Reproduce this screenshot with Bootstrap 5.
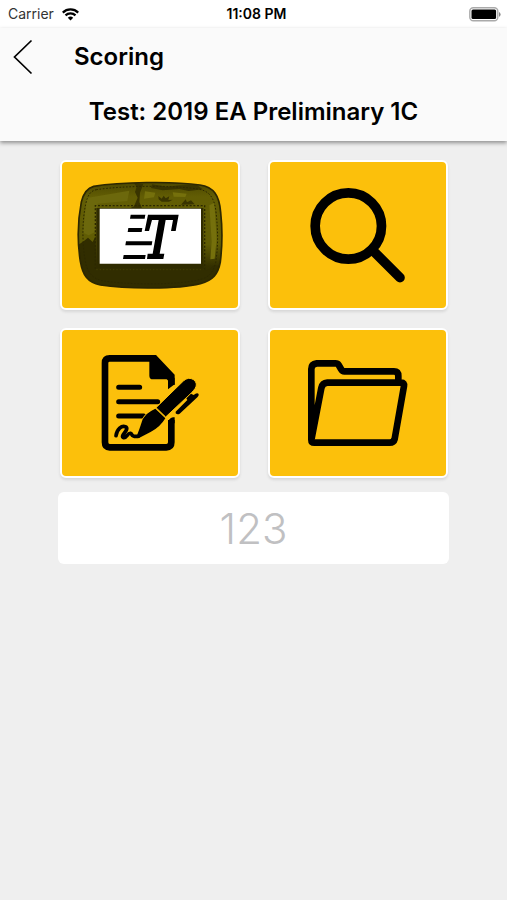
<!DOCTYPE html>
<html lang="en">
<head>
<meta charset="utf-8">
<meta name="viewport" content="width=device-width, initial-scale=1">
<title>Scoring</title>
<link href="https://cdn.jsdelivr.net/npm/bootstrap@5.3.0/dist/css/bootstrap.min.css" rel="stylesheet">
<style>
body { background: #efefef; color: #000; font-family: Inter, "Liberation Sans", sans-serif; }
.status-bar { height: 28px; font-size: 14px; line-height: 28px; padding: 0 6px 0 8px; background: #fff; }
.status-side { flex: 1 1 0; }
.status-time { font-size: 14px; padding-left: 4px; }
.carrier { color: #333; }
.app-header { background: #fafafa; box-shadow: 0 2px 4px rgba(0,0,0,.4); }
.title-row { height: 58px; padding-left: 12px; gap: 40px; }
.back-btn { width: 22px; height: 36px; line-height: 0; }
.screen-title, .test-title { font-size: 24px; line-height: 28px; font-weight: 600; }
.test-title { padding: 12px 0 15px; }
.scoring-main { padding: 19px 58px; }
.tile-grid { display: grid; grid-template-columns: 1fr 1fr; gap: 18px 28px; padding: 0 1px 0 2px; }
.tile { background: #fcc00b; border: 2px solid #fff; border-radius: 6px; box-shadow: 0 2px 3px rgba(0,0,0,.1); line-height: 0; overflow: hidden; }
.tile:hover, .tile:focus { background: #fcc00b; border-color: #fff; }
.tile svg { width: 100%; height: auto; }
.score-input { height: 72px; margin-top: 14px; font-size: 42px; font-weight: 300; border-radius: 6px; }
.score-input::placeholder { color: #c0c0c2; opacity: 1; }
</style>
</head>
<body>
<div class="status-bar d-flex align-items-center">
  <div class="status-side carrier d-flex align-items-center gap-2">
    <span>Carrier</span>
    <svg width="17" height="13" viewBox="0 0 17 13" fill="none" stroke="#000" stroke-width="2.2" aria-label="Wi-Fi"><path d="M.8 4.6a11 11 0 0 1 15.4 0M3.5 7.4a7.1 7.1 0 0 1 10 0"/><path d="M8.500 12.500 5.800 9.800a3.900 3.900 0 0 1 5.400 0Z" fill="#000" stroke="none"/></svg>
  </div>
  <div class="status-time fw-semibold">11:08 PM</div>
  <div class="status-side d-flex justify-content-end">
    <svg width="32" height="15" viewBox="0 0 32 15" aria-label="Battery full"><rect x=".8" y=".8" width="28" height="13" rx="3.500" fill="#fff" stroke="#aaa" stroke-width="1.400"/><rect x="2.500" y="2.500" width="24.600" height="9.600" rx="1.500"/><path d="M30 5q1.600.7 1.600 2.400T30 9.800Z" fill="#888"/></svg>
  </div>
</div>
<header class="app-header">
  <div class="title-row d-flex align-items-center">
    <button type="button" class="back-btn btn p-0 border-0" aria-label="Back">
      <svg width="22" height="36" viewBox="0 0 22 36" fill="none" stroke="#000" stroke-width="1.700"><path d="M19.500 1.500 2.500 18l17 16.500"/></svg>
    </button>
    <h1 class="screen-title m-0">Scoring</h1>
  </div>
  <h2 class="test-title m-0 text-center">Test: 2019 EA Preliminary 1C</h2>
</header>
<main class="scoring-main">
  <div class="tile-grid">
    <button type="button" class="tile btn p-0" aria-label="Bridle number">
      <svg viewBox="36 30 528 438">
        <defs>
          <linearGradient id="leather" x1="0" y1="0" x2="0" y2="1"><stop offset="0" stop-color="#4a4500"/><stop offset=".15" stop-color="#625d04"/><stop offset=".58" stop-color="#605c04"/><stop offset=".78" stop-color="#343000"/><stop offset="1" stop-color="#2b2800"/></linearGradient>
          <clipPath id="patch"><path d="M131 103C210 90 370 87 450 99C491 105 508 130 512 181C518 235 517 280 511 330C504 367 489 384 451 395C383 412 230 411 151 399C112 391 98 369 91 328C82 271 83 207 94 150C101 122 111 108 131 103Z"/></clipPath>
        </defs>
        <g clip-path="url(#patch)">
          <rect x="80" y="85" width="440" height="330" fill="url(#leather)"/>
          <path d="M82 280 101 268 114 257 128 270 137 252 139 348H460L469 356 493 340 518 344V415H80Z" fill="#312d00"/>
          <path d="M251 92 260 104 255 120 263 137 252 163 242 168 276 169 268 150 270 122 280 96ZM306 97 350 104 390 100 440 98 458 112 416 117 388 111 338 115 303 108ZM325 132 335 140 341 131 347 139 358 133 355 144 368 143 357 149H335L326 142ZM393 158 407 142 411 151 423 145 434 157Z" fill="#393400"/>
          <path d="M285 118 316 122 312 136 282 140ZM368 121 410 125 406 135 371 134ZM478 160 493 152 500 260 494 320 481 322 485 269Z" fill="#75700c"/>
          <path d="M110 138 238 116 232 147 143 155 136 240 116 250 99 242Z" fill="#6c680c"/>
          <path d="M139 348H460V168H139Z" fill="#2f2b00"/>
          <path d="M136 351V161H464V352" fill="none" stroke="#2c2800" stroke-width="4" stroke-dasharray="6 5"/>
          <path d="M139 353H460" stroke="#4d4803" stroke-width="2" stroke-dasharray="4 6"/>
          <path d="M139 113C220 101 365 99 444 111C479 117 493 137 498 180C505 240 504 290 497 331C489 365 475 377 445 384C380 399 229 399 156 386C126 379 111 360 105 323C96 265 97 205 107 157C113 129 121 117 139 113Z" fill="none" stroke="#2c2800" stroke-width="3" stroke-dasharray="5 5"/>
        </g>
        <path d="M131 103C210 90 370 87 450 99C491 105 508 130 512 181C518 235 517 280 511 330C504 367 489 384 451 395C383 412 230 411 151 399C112 391 98 369 91 328C82 271 83 207 94 150C101 122 111 108 131 103Z" fill="none" stroke="#2c2700" stroke-width="5"/>
        <path d="M149 170H453V335H149Z" fill="#fff"/>
        <path d="M242 188H286L284 200H240ZM235 228H277L275 240H233ZM228 268H307L305 280H226ZM221 309H287L285 321H219Z"/>
        <path d="M294 188H386L377 237H363L369 204H347L329 305H343L340 321H291L293 305H308L326 204H306L297 237H284Z"/>
      </svg>
    </button>
    <button type="button" class="tile btn p-0" aria-label="Search">
      <svg viewBox="30 30 528 438" fill="none" stroke="#000"><circle cx="265" cy="222" r="99.500" stroke-width="29"/><path d="M336 293 420 377" stroke-width="29" stroke-linecap="round"/></svg>
    </button>
    <button type="button" class="tile btn p-0" aria-label="Sign score sheet">
      <svg viewBox="36 30 528 438">
        <path d="M364 195V178L312 115H179Q165 115 165 129V367Q165 382 179 382H349Q364 382 364 367V300" fill="none" stroke="#000" stroke-width="20"/>
        <path d="M298 105H318L374 164V193L354 208V178H309Q298 178 298 167ZM354 303Q363 289 374 292V310H354Z"/>
        <path d="M206 202H269M206 245H323M206 288H281" stroke="#000" stroke-width="15" stroke-linecap="round"/>
        <path d="M258 354 269 325 278 298Q288 279 316 266L346 295Q330 322 303 335L267 354Z" stroke="#fcc00b" stroke-width="4"/>
        <path d="M258 354 269 325 278 298Q288 279 316 266L346 295Q330 322 303 335L267 354Z"/>
        <path d="M318 263 400 183Q415 169 431 179Q445 191 435 206Q431 211 425 218L347 291Z" stroke="#fcc00b" stroke-width="3"/>
        <path d="M377 275 412 240 409 235 423 221 431 225Q441 216 446 222Q447 227 442 232L389 281Q382 285 377 280Z"/>
        <path d="M198 347C201 327 215 316 226 320C242 327 207 349 221 353C231 355 232 338 242 340C249 343 241 351 264 349" fill="none" stroke="#000" stroke-width="11" stroke-linecap="round" stroke-linejoin="round"/>
      </svg>
    </button>
    <button type="button" class="tile btn p-0" aria-label="Open folder">
      <svg viewBox="30 30 528 438" fill="none" stroke="#000" stroke-width="20" stroke-linejoin="round"><path d="M415 187V168Q415 154 402 154H253Q247 154 243 147L236 135Q233 130 226 130H170Q154 132 154 147V359Q154 368 163 368H389Q401 368 404 357L432 198Q434 188 424 188H202Q187 189 184 204L155 355"/></svg>
    </button>
  </div>
  <input type="text" inputmode="numeric" class="score-input form-control border-0 text-center" placeholder="123" aria-label="Competitor number">
</main>
<script src="https://cdn.jsdelivr.net/npm/bootstrap@5.3.0/dist/js/bootstrap.bundle.min.js"></script>
</body>
</html>
